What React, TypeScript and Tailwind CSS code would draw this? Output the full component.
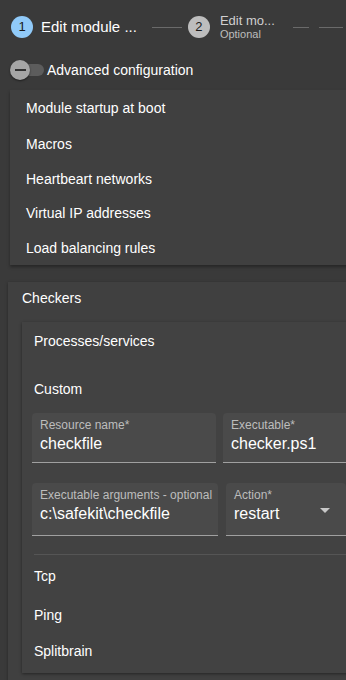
import React from "react";

const font = { fontFamily: '"Liberation Sans", Arial, sans-serif' };

function Field({ label, value, w, h, select }: { label: string; value: string; w: string; h: string; select?: boolean }) {
  return (
    <div className={`relative shrink-0 rounded-t-[4px] bg-[#4a4a4a] border-b border-[#a0a0a0] ${w} ${h} pl-2 pt-[5px]`}>
      <div className="text-[12px] leading-[14px] text-[#bdbdbd]">{label}</div>
      <div className="text-[16px] leading-[20px] text-white mt-[2px]">{value}</div>
      {select && (
        <div className="absolute right-[16px] top-[25px] w-0 h-0 border-l-[5px] border-r-[5px] border-t-[5px] border-l-transparent border-r-transparent border-t-[#c8c8c8]" />
      )}
    </div>
  );
}

export default function App() {
  return (
    <div className="w-[346px] h-[680px] overflow-hidden bg-[#3a3a3a] text-white" style={font}>
      {/* Stepper */}
      <div className="flex items-center h-[54px] pl-[11px] whitespace-nowrap">
        <div className="w-[22px] h-[22px] rounded-full bg-[#90caf9] text-[#1a1a1a] text-[13px] flex items-center justify-center shrink-0">1</div>
        <div className="ml-[8px] text-[15px] text-white">Edit module ...</div>
        <div className="ml-[15px] w-[30px] h-px bg-[#6a6a6a] shrink-0" />
        <div className="ml-[6px] w-[22px] h-[22px] rounded-full bg-[#bdbdbd] text-[#1a1a1a] text-[13px] flex items-center justify-center shrink-0">2</div>
        <div className="ml-[10px] flex flex-col leading-none">
          <span className="text-[13px] text-[#d0d0d0] leading-[14px]">Edit mo...</span>
          <span className="text-[11px] text-[#bdbdbd] leading-[13px]">Optional</span>
        </div>
        <div className="ml-[18px] w-[16px] h-px bg-[#6a6a6a] shrink-0" />
        <div className="ml-[10px] w-[24px] h-px bg-[#6a6a6a] shrink-0" />
      </div>

      {/* Switch */}
      <div className="flex items-center h-[32px] pl-[10px]">
        <div className="relative w-[34px] h-[20px] shrink-0">
          <div className="absolute left-[6px] right-0 top-[4px] h-[12px] rounded-full bg-[#5c5c5c]" />
          <div className="absolute left-0 top-0 w-[20px] h-[20px] rounded-full bg-[#a6a6a6] shadow-[0_1px_2px_rgba(0,0,0,0.5)] flex items-center justify-center">
            <div className="w-[11px] h-[2px] bg-[#333333]" />
          </div>
        </div>
        <div className="ml-[3px] text-[14px] text-white">Advanced configuration</div>
      </div>

      {/* Panel 1 */}
      <div className="ml-[10px] mt-[4px] w-[360px] bg-[#404040] shadow-[0_2px_3px_rgba(0,0,0,0.35)] text-[14px] pl-[16px]">
        <div className="h-[36px] flex items-center">Module startup at boot</div>
        <div className="h-[36px] flex items-center">Macros</div>
        <div className="h-[34px] flex items-center">Heartbeart networks</div>
        <div className="h-[35px] flex items-center">Virtual IP addresses</div>
        <div className="h-[34px] flex items-center">Load balancing rules</div>
      </div>

      {/* Panel 2 */}
      <div className="ml-[8px] mt-[17px] w-[360px] h-[420px] bg-[#404040] shadow-[0_1px_3px_rgba(0,0,0,0.35)] pl-[14px]">
        <div className="h-[32px] flex items-center text-[14px]">Checkers</div>
        <div className="mt-[8px] bg-[#424242] shadow-[0_1px_3px_rgba(0,0,0,0.45)] pl-[12px] pb-[4px] text-[14px]">
          <div className="h-[38px] flex items-center">Processes/services</div>
          <div className="h-[17px]" />
          <div className="h-[24px] flex items-center">Custom</div>
          <div className="mt-[12px] flex gap-[7px] -ml-[2px]">
            <Field label="Resource name*" value="checkfile" w="w-[184px]" h="h-[50px]" />
            <Field label="Executable*" value="checker.ps1" w="w-[140px]" h="h-[50px]" />
          </div>
          <div className="mt-[20px] flex gap-[8px] -ml-[2px]">
            <Field label="Executable arguments - optional" value="c:\safekit\checkfile" w="w-[186px]" h="h-[53px]" />
            <Field label="Action*" value="restart" w="w-[120px]" h="h-[53px]" select />
          </div>
          <div className="mt-[18px] h-px bg-[#555555]" />
          <div className="h-[42px] flex items-center">Tcp</div>
          <div className="h-[36px] flex items-center">Ping</div>
          <div className="h-[36px] flex items-center">Splitbrain</div>
        </div>
      </div>
    </div>
  );
}
